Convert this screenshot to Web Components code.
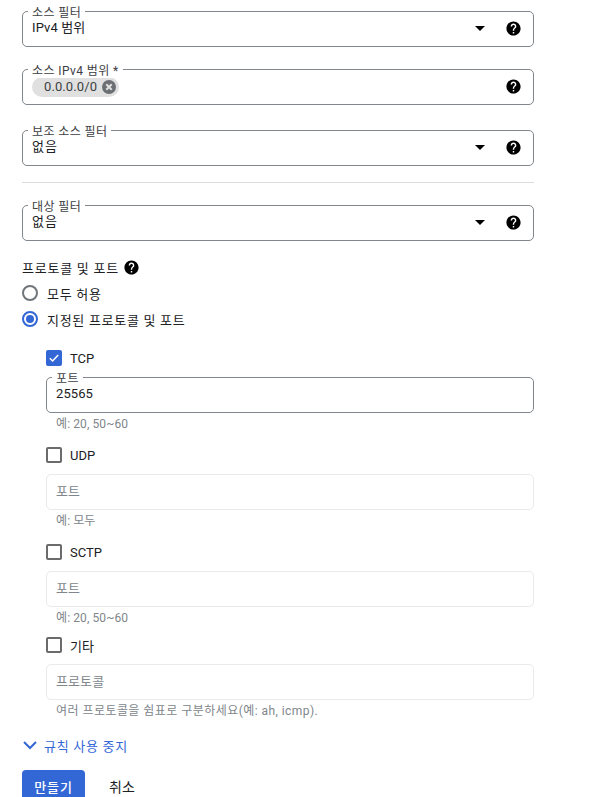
<!DOCTYPE html>
<html lang="ko">
<head>
<meta charset="utf-8">
<title>방화벽 규칙</title>
<style>
html,body{margin:0;background:#fff}
body{font-family:Roboto,"Noto Sans CJK KR",sans-serif;font-size:13px;color:#202124;overflow:hidden;height:797px}
</style>
</head>
<body>
<firewall-form></firewall-form>

<template id="help-tpl"><svg width="17" height="17" viewBox="0 0 24 24"><path fill="#000" d="M12 2C6.480 2 2 6.480 2 12s4.480 10 10 10 10-4.480 10-10S17.520 2 12 2zm1 17h-2v-2h2v2zm2.070-7.750l-.9.920C13.450 12.900 13 13.500 13 15h-2v-.5c0-1.100.45-2.100 1.170-2.830l1.240-1.260c.37-.36.59-.86.59-1.410 0-1.100-.9-2-2-2s-2 .9-2 2H8c0-2.210 1.790-4 4-4s4 1.790 4 4c0 .88-.36 1.680-.93 2.250z"/></svg></template>

<script>
const helpIcon = () => document.getElementById('help-tpl').innerHTML

class GcField extends HTMLElement{
    constructor(){
        super()
        this._shadowDom = this.attachShadow({mode: 'open'})
    }
    connectedCallback(){
        const label = this.getAttribute('label')
        const empty = this.hasAttribute('empty')
        const select = this.hasAttribute('select')
        const help = this.hasAttribute('help')
        this._shadowDom.innerHTML = `
        <style>
        :host{display:block;position:relative}
        .box{
            height:36px;
            box-sizing:border-box;
            border:1px solid #80868b;
            border-radius:5px;
            padding:0 11px 0 9px;
            display:flex;
            align-items:center;
            font-size:13px;
            color:#202124;
        }
        :host([empty]) .box{border-color:#e8eaed;color:#80868b}
        .value{flex:1;display:flex;align-items:center;height:100%;padding-bottom:var(--value-pb,5px);box-sizing:border-box;letter-spacing:var(--value-ls,.1px)}
        :host([empty]) .value{padding-bottom:4px}
        .label{
            position:absolute;
            left:6px;
            top:-4px;
            padding:0 4px;
            background:#fff;
            font-size:12px;
            line-height:13px;
            letter-spacing:.4px;
            color:#3c4043;
        }
        .arrow{width:0;height:0;border-left:5px solid transparent;border-right:5px solid transparent;border-top:5px solid #000;margin-right:20px;margin-bottom:2px}
        .help{display:flex;margin-bottom:2px}
        </style>
        ${empty ? '' : `<div class="label">${label}</div>`}
        <div class="box">
            <div class="value"><slot></slot></div>
            ${select ? '<div class="arrow"></div>' : ''}
            ${help ? `<div class="help">${helpIcon()}</div>` : ''}
        </div>
        `
    }
}

class GcChip extends HTMLElement{
    constructor(){
        super()
        this._shadowDom = this.attachShadow({mode: 'open'})
        this._shadowDom.innerHTML = `
        <style>
        :host{display:inline-flex;align-items:center;height:20px;border-radius:10px;background:#e0e0e0;padding:0 2px 0 12px;gap:4px;font-size:13px;color:#3c4043;margin-top:4px}
        svg{display:block}
        </style>
        <slot></slot>
        <svg width="16" height="16" viewBox="0 0 16 16"><circle cx="8" cy="8" r="7" fill="#6b6f73"/><path d="M5.300 5.300l5.400 5.400M10.700 5.300l-5.400 5.400" stroke="#e0e0e0" stroke-width="2"/></svg>
        `
    }
}

class GcRadio extends HTMLElement{
    constructor(){
        super()
        this._shadowDom = this.attachShadow({mode: 'open'})
        this._shadowDom.innerHTML = `
        <style>
        :host{display:flex;align-items:center;gap:9px;height:16px;font-size:13px;color:#202124;letter-spacing:.7px}
        .ring{width:16px;height:16px;box-sizing:border-box;border:2px solid #70757a;border-radius:50%;display:flex;align-items:center;justify-content:center}
        :host([checked]) .ring{border-color:#3367d6}
        :host([checked]) .ring::after{content:"";width:8px;height:8px;border-radius:50%;background:#3367d6}
        </style>
        <div class="ring"></div><span><slot></slot></span>
        `
    }
}

class GcCheck extends HTMLElement{
    constructor(){
        super()
        this._shadowDom = this.attachShadow({mode: 'open'})
        this._shadowDom.innerHTML = `
        <style>
        :host{display:flex;align-items:center;gap:8px;height:16px;font-size:13px;color:#202124}
        .box{width:16px;height:16px;box-sizing:border-box;border:2px solid #6b6b6b;border-radius:2px;display:flex;align-items:center;justify-content:center}
        :host([checked]) .box{background:#3367d6;border-color:#3367d6}
        svg{display:none}
        :host([checked]) svg{display:block}
        </style>
        <div class="box"><svg width="12" height="12" viewBox="0 0 12 12"><path d="M1.800 6.200l2.800 2.800 5.600-6" fill="none" stroke="#fff" stroke-width="1.500"/></svg></div>
        <span><slot></slot></span>
        `
    }
}

class GcHint extends HTMLElement{
    constructor(){
        super()
        this._shadowDom = this.attachShadow({mode: 'open'})
        this._shadowDom.innerHTML = `
        <style>
        :host{display:block;padding-left:10px;font-size:12px;line-height:14px;color:#80868b;letter-spacing:var(--hint-ls,.1px)}
        </style>
        <slot></slot>
        `
    }
}

class PortRow extends HTMLElement{
    constructor(){
        super()
        this._shadowDom = this.attachShadow({mode: 'open'})
    }
    connectedCallback(){
        const name = this.getAttribute('name')
        const label = this.getAttribute('label')
        const value = this.getAttribute('value')
        const hint = this.getAttribute('hint')
        const checked = this.hasAttribute('checked')
        this._shadowDom.innerHTML = `
        <style>
        :host{display:block;font-family:inherit;--value-pb:3px}
        gc-check{margin-bottom:11px}
        gc-field{margin-bottom:4px}
        </style>
        <gc-check ${checked ? 'checked' : ''}>${name}</gc-check>
        <gc-field label="${label}" ${checked ? '' : 'empty'}>${value || label}</gc-field>
        <gc-hint>${hint}</gc-hint>
        `
    }
}

class FirewallForm extends HTMLElement{
    constructor(){
        super()
        this._shadowDom = this.attachShadow({mode: 'open'})
    }
    connectedCallback(){
        this._shadowDom.innerHTML = `
        <style>
        :host{display:block;width:512px;padding:11px 0 0 22px}
        .f2{margin-top:22px}
        .f3{margin-top:25px}
        .wide{--value-ls:1px}
        hr{border:0;border-top:1px solid #dadce0;margin:16px 0 22px 0;height:0}
        .heading{display:flex;align-items:center;gap:4px;margin-top:18px;height:16px;font-size:13px;color:#202124;letter-spacing:.75px}
        .heading svg{display:block}
        .r1{margin-top:10px}
        .r2{margin-top:10px}
        .ports{padding-left:24px;margin-top:23px;display:flex;flex-direction:column}
        .tcp{margin-bottom:16px}
        .udp{margin-bottom:16px}
        .sctp{margin-bottom:12px}
        .other{--hint-ls:.45px}
        .toggle{display:flex;align-items:center;gap:6px;margin-top:19px;height:16px;color:#3367d6;font-size:13px;letter-spacing:.7px}
        .actions{display:flex;align-items:center;margin-top:17px;gap:24px}
        .primary{height:32px;width:63px;border-radius:4px;background:#3367d6;color:#fff;display:flex;align-items:center;justify-content:center;font-size:13px;font-weight:500;letter-spacing:.9px}
        .cancel{font-size:14px;color:#202124}
        </style>
        <gc-field label="소스 필터" select help>IPv4 범위</gc-field>
        <gc-field class="f2" label="소스 IPv4 범위 *" help><gc-chip>0.0.0.0/0</gc-chip></gc-field>
        <gc-field class="f3 wide" label="보조 소스 필터" select help>없음</gc-field>
        <hr>
        <gc-field class="wide" label="대상 필터" select help>없음</gc-field>
        <div class="heading">프로토콜 및 포트 ${helpIcon()}</div>
        <gc-radio class="r1">모두 허용</gc-radio>
        <gc-radio class="r2" checked>지정된 프로토콜 및 포트</gc-radio>
        <div class="ports">
            <port-row class="tcp" checked name="TCP" label="포트" value="25565" hint="예: 20, 50~60"></port-row>
            <port-row class="udp" name="UDP" label="포트" hint="예: 모두"></port-row>
            <port-row class="sctp" name="SCTP" label="포트" hint="예: 20, 50~60"></port-row>
            <port-row class="other" name="기타" label="프로토콜" hint="여러 프로토콜을 쉼표로 구분하세요(예: ah, icmp)."></port-row>
        </div>
        <div class="toggle">
            <svg width="16" height="16" viewBox="0 0 16 16"><path d="M2 5l6 6 6-6" fill="none" stroke="#3367d6" stroke-width="2"/></svg>
            규칙 사용 중지
        </div>
        <div class="actions">
            <div class="primary">만들기</div>
            <div class="cancel">취소</div>
        </div>
        `
    }
}

customElements.define('gc-field', GcField)
customElements.define('gc-chip', GcChip)
customElements.define('gc-radio', GcRadio)
customElements.define('gc-check', GcCheck)
customElements.define('gc-hint', GcHint)
customElements.define('port-row', PortRow)
customElements.define('firewall-form', FirewallForm)
</script>
</body>
</html>
